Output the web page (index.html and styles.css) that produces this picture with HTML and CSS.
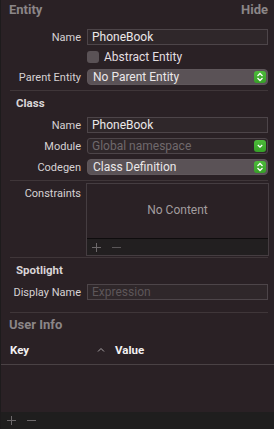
FILE: index.html
```html
<!DOCTYPE html>
<html lang="en">
<head>
    <meta charset="UTF-8">
    <title>Entity Inspector</title>
    <link rel="stylesheet" href="styles.css">
</head>
<body>
    <div class="inspector">
        <div class="panel-head">
            <span>Entity</span>
            <span>Hide</span>
        </div>

        <div class="rows entity-rows">
            <div class="row">
                <label>Name</label>
                <div class="field">PhoneBook</div>
            </div>
            <div class="row check-row">
                <span></span>
                <div class="check"><span class="box"></span>Abstract Entity</div>
            </div>
            <div class="row">
                <label>Parent Entity</label>
                <div class="popup">No Parent Entity
                    <span class="stepper">
                        <svg width="8" height="10" viewBox="0 0 8 10"><path d="M1.5 4 L4 1.5 L6.5 4 M1.5 6 L4 8.5 L6.5 6" fill="none" stroke="#fff" stroke-width="1.3"/></svg>
                    </span>
                </div>
            </div>
        </div>

        <div class="sep"></div>

        <div class="sub-head">Class</div>
        <div class="rows">
            <div class="row">
                <label>Name</label>
                <div class="field">PhoneBook</div>
            </div>
            <div class="row">
                <label>Module</label>
                <div class="field muted">Global namespace
                    <span class="stepper">
                        <svg width="8" height="10" viewBox="0 0 8 10"><path d="M1.8 4 L4 6.2 L6.2 4" fill="none" stroke="#fff" stroke-width="1.3"/></svg>
                    </span>
                </div>
            </div>
            <div class="row">
                <label>Codegen</label>
                <div class="popup">Class Definition
                    <span class="stepper">
                        <svg width="8" height="10" viewBox="0 0 8 10"><path d="M1.5 4 L4 1.5 L6.5 4 M1.5 6 L4 8.5 L6.5 6" fill="none" stroke="#fff" stroke-width="1.3"/></svg>
                    </span>
                </div>
            </div>
        </div>

        <div class="sep"></div>

        <div class="constraints">
            <label>Constraints</label>
            <div class="table-box">
                <div class="empty">No Content</div>
                <div class="box-bar">
                    <svg width="9" height="9" viewBox="0 0 9 9"><path d="M4.5 0 V9 M0 4.5 H9" stroke="#6d696b" stroke-width="1"/></svg>
                    <svg width="9" height="9" viewBox="0 0 9 9"><path d="M0 4.5 H9" stroke="#5a5658" stroke-width="1"/></svg>
                </div>
            </div>
        </div>

        <div class="sep sep-tight"></div>

        <div class="sub-head">Spotlight</div>
        <div class="rows">
            <div class="row">
                <label>Display Name</label>
                <div class="field placeholder">Expression</div>
            </div>
        </div>

        <div class="sep sep-wide"></div>

        <div class="panel-head user-info">
            <span>User Info</span>
        </div>

        <div class="kv-head">
            <span class="key">Key</span>
            <span class="caret">
                <svg width="8" height="6" viewBox="0 0 8 6"><path d="M1 4.5 L4 1.5 L7 4.5" fill="none" stroke="#a8a3a5" stroke-width="1"/></svg>
            </span>
            <span class="value">Value</span>
        </div>

        <div class="kv-list"></div>

        <div class="bottom-bar">
            <svg width="9" height="9" viewBox="0 0 9 9"><path d="M4.5 0 V9 M0 4.5 H9" stroke="#6d696b" stroke-width="1"/></svg>
            <svg width="9" height="9" viewBox="0 0 9 9"><path d="M0 4.5 H9" stroke="#6d696b" stroke-width="1"/></svg>
        </div>
    </div>
</body>
</html>
```

FILE: styles.css
```css
body {
    margin: 0;
    background-color: #2a2125;
    font-family: Roboto, "Noto Sans", sans-serif;
    font-size: 11px;
    color: #dcd8da;
}

.inspector {
    width: 274px;
    height: 429px;
    box-sizing: border-box;
    border-left: 1px solid #1d1b1c;
    display: flex;
    flex-direction: column;
    background-color: #2a2125;
}

.panel-head {
    display: flex;
    justify-content: space-between;
    height: 20px;
    line-height: 20px;
    padding: 0 6px 0 8px;
    font-size: 13px;
    font-weight: 700;
    color: #8b8688;
}

.rows {
    display: flex;
    flex-direction: column;
    gap: 5px;
    padding-right: 6px;
}

.entity-rows {
    margin-top: 9px;
}

.row {
    display: grid;
    grid-template-columns: 80px 1fr;
    column-gap: 6px;
    align-items: center;
    height: 16px;
}

.check-row {
    height: 14px;
}

.row label {
    text-align: right;
    color: #d6d2d4;
    white-space: nowrap;
}

.field, .popup {
    position: relative;
    height: 16px;
    line-height: 14px;
    box-sizing: border-box;
    padding: 0 4px;
    font-size: 12px;
    color: #ebe8e9;
}

.field {
    background-color: #2f272a;
    border: 1px solid #4d4549;
}

.field.muted {
    color: #6f696c;
    border-radius: 3px;
}

.field.placeholder {
    color: #5d5659;
}

.popup {
    background-color: #5a5256;
    border: 1px solid #5f575b;
    border-radius: 4px;
    padding-left: 5px;
}

.stepper {
    position: absolute;
    right: 1px;
    top: 1px;
    width: 12px;
    height: 12px;
    border-radius: 3px;
    background: linear-gradient(#4dbb3a, #36a127);
    display: flex;
    align-items: center;
    justify-content: center;
}

.check {
    display: flex;
    align-items: center;
    gap: 5px;
    font-size: 12px;
    color: #e3dfe1;
}

.check .box {
    width: 12px;
    height: 12px;
    border-radius: 3px;
    background-color: #5a5256;
}

.sep {
    height: 1px;
    background-color: #3f3639;
    margin: 5px 6px 0 9px;
}

.sep-tight {
    margin-top: 1px;
}

.sep-wide {
    margin-top: 12px;
}

.sub-head {
    padding: 2px 0 0 15px;
    height: 21px;
    line-height: 21px;
    margin-bottom: 3px;
    font-size: 11.5px;
    font-weight: 700;
    color: #d9d5d7;
}

.constraints {
    display: grid;
    grid-template-columns: 80px 1fr;
    column-gap: 5px;
    padding-right: 5px;
    margin-top: 2px;
}

.constraints label {
    text-align: right;
    padding-top: 3px;
    line-height: 16px;
    color: #d6d2d4;
}

.table-box {
    height: 71px;
    border: 1px solid #453d41;
    display: flex;
    flex-direction: column;
}

.empty {
    flex: 1;
    display: flex;
    align-items: center;
    justify-content: center;
    color: #a29d9f;
    font-size: 12px;
    padding-bottom: 3px;
}

.box-bar {
    height: 16px;
    border-top: 1px solid #0e0c0d;
    background-color: #221f20;
    display: flex;
    align-items: center;
    gap: 11px;
    padding-left: 5px;
}

.user-info {
    height: 26px;
    line-height: 24px;
}

.kv-head {
    display: flex;
    align-items: center;
    height: 26px;
    padding-left: 9px;
    padding-bottom: 3px;
    box-sizing: border-box;
    font-size: 11.5px;
    font-weight: 700;
    color: #f2f0f1;
    border-bottom: 1px solid #4a4245;
}

.kv-head .key {
    width: 87px;
}

.kv-head .caret {
    width: 18px;
    display: flex;
    align-items: center;
}

.kv-list {
    flex: 1;
}

.bottom-bar {
    height: 17px;
    background-color: #1f1e1e;
    display: flex;
    align-items: center;
    gap: 11px;
    padding-left: 6px;
}
```
